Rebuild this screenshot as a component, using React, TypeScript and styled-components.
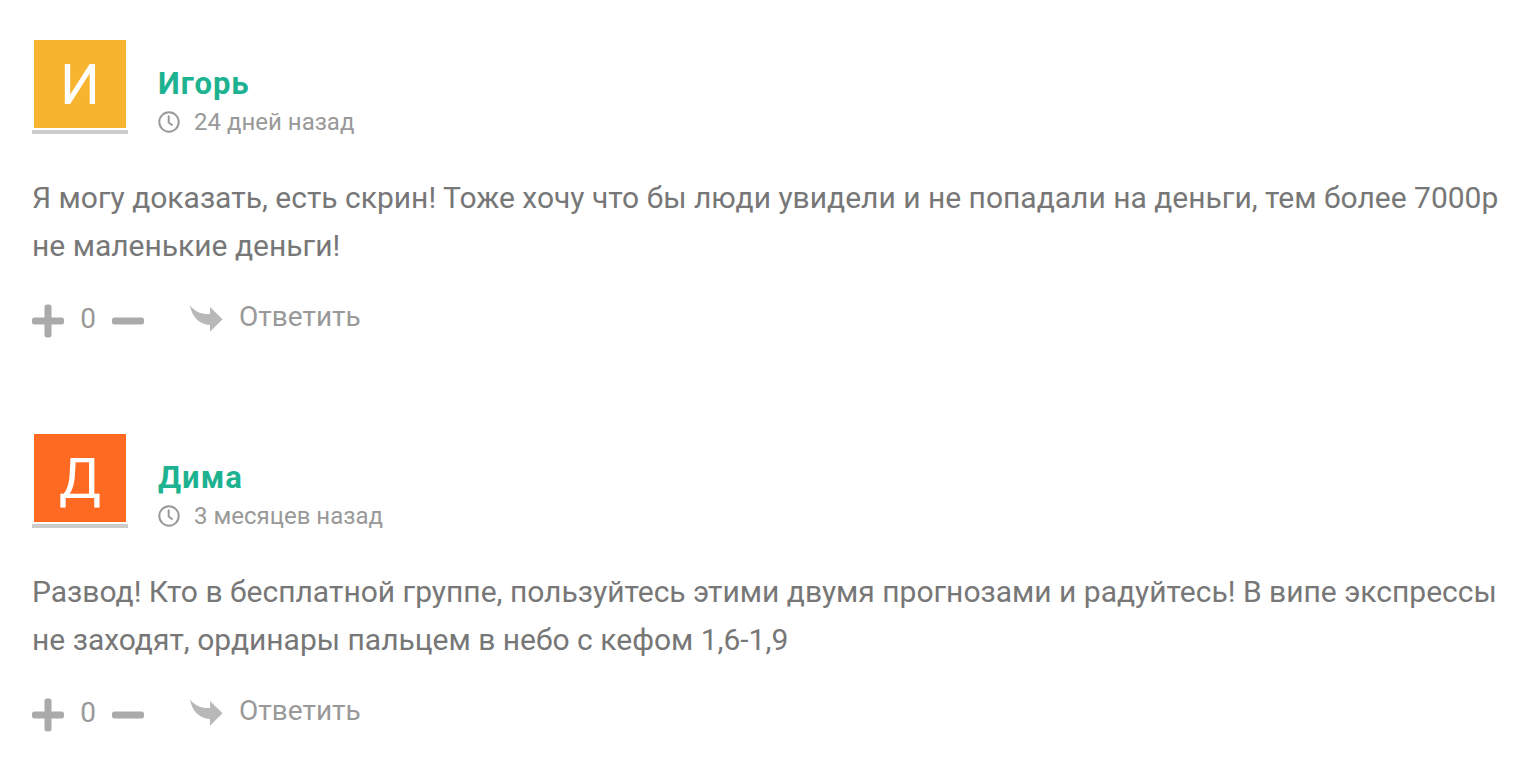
import React from "react";
import styled, { createGlobalStyle } from "styled-components";

const Global = createGlobalStyle`
  * { box-sizing: border-box; }
  body { margin: 0; background: #fff; font-family: Roboto, "Liberation Sans", sans-serif; }
`;
const List = styled.main`
  display: flex;
  flex-direction: column;
  gap: 95px;
  padding: 38px 24px 20px 32px;
`;
const Comment = styled.article`
  display: flex;
  flex-direction: column;
`;
const Header = styled.header`
  display: flex;
  gap: 30px;
  height: 96px;
`;
const Avatar = styled.div`
  width: 96px;
  height: 96px;
  padding: 2px 2px 0;
  border-bottom: 4px solid #ccc;
`;
const Letter = styled.div<{ $color: string }>`
  height: 88px;
  background: ${(p) => p.$color};
  color: #fff;
  font-size: 56px;
  line-height: 90px;
  text-align: center;
`;
const Meta = styled.div`
  padding-top: 28px;
`;
const Author = styled.a`
  display: block;
  color: #1db290;
  font-size: 31px;
  font-weight: 700;
  line-height: 36px;
  letter-spacing: 1px;
  text-decoration: none;
`;
const When = styled.div`
  display: flex;
  align-items: center;
  gap: 14px;
  color: #999;
  font-size: 24px;
  line-height: 40px;
`;
const Text = styled.p`
  margin: 40px 0 31px;
  color: #777;
  font-size: 30px;
  line-height: 48px;
`;
const Footer = styled.footer`
  display: flex;
  align-items: center;
  height: 36px;
  color: #999;
  font-size: 28px;
  line-height: 36px;
`;
const VoteButton = styled.button`
  display: flex;
  padding: 4px 0 0;
  border: 0;
  background: none;
  color: #aaa;
`;
const Count = styled.span`
  width: 48px;
  text-align: center;
`;
const Reply = styled.button`
  display: flex;
  align-items: center;
  gap: 16px;
  margin-left: 46px;
  padding: 0;
  border: 0;
  background: none;
  color: #999;
  font: inherit;
`;
const ReplyLabel = styled.span`
  padding-bottom: 4px;
`;

const Clock = () => (
  <svg width="22" height="22" viewBox="0 0 22 22" fill="none" stroke="#999" strokeWidth="2" strokeLinecap="round" strokeLinejoin="round" aria-hidden="true">
    <circle cx="11" cy="11" r="9.7" />
    <path d="M10.7 5.2v6.3l3.3 2.5" />
  </svg>
);
const Plus = () => (
  <svg width="32" height="34" viewBox="0 0 32 34" fill="currentColor" aria-hidden="true">
    <rect x="0" y="13.5" width="32" height="7" rx="2.5" />
    <rect x="12.5" y="0.5" width="7" height="33" rx="2.5" />
  </svg>
);
const Minus = () => (
  <svg width="32" height="34" viewBox="0 0 32 34" fill="currentColor" aria-hidden="true">
    <rect x="0" y="13.5" width="32" height="7" rx="2.5" />
  </svg>
);
const ReplyArrow = () => (
  <svg width="33" height="28" viewBox="0 0 33 28" fill="#b8b8b8" aria-hidden="true">
    <path d="M0 0.2C5 7 12 9.5 20 9V2L32.5 14.2L20 26.8V20C9 19 2 12 0 0.2Z" />
  </svg>
);

const comments = [
  { name: "Игорь", letter: "И", color: "#f7b42f", when: "24 дней назад", text: "Я могу доказать, есть скрин! Тоже хочу что бы люди увидели и не попадали на деньги, тем более 7000р не маленькие деньги!" },
  { name: "Дима", letter: "Д", color: "#ff6a22", when: "3 месяцев назад", text: "Развод! Кто в бесплатной группе, пользуйтесь этими двумя прогнозами и радуйтесь! В випе экспрессы не заходят, ординары пальцем в небо с кефом 1,6-1,9" },
];

export default function App() {
  return (
    <>
      <Global />
      <List>
        {comments.map((c) => (
          <Comment key={c.name}>
            <Header>
              <Avatar><Letter $color={c.color}>{c.letter}</Letter></Avatar>
              <Meta>
                <Author href="#">{c.name}</Author>
                <When><Clock />{c.when}</When>
              </Meta>
            </Header>
            <Text>{c.text}</Text>
            <Footer>
              <VoteButton type="button" aria-label="Плюс"><Plus /></VoteButton>
              <Count>0</Count>
              <VoteButton type="button" aria-label="Минус"><Minus /></VoteButton>
              <Reply type="button"><ReplyArrow /><ReplyLabel>Ответить</ReplyLabel></Reply>
            </Footer>
          </Comment>
        ))}
      </List>
    </>
  );
}
